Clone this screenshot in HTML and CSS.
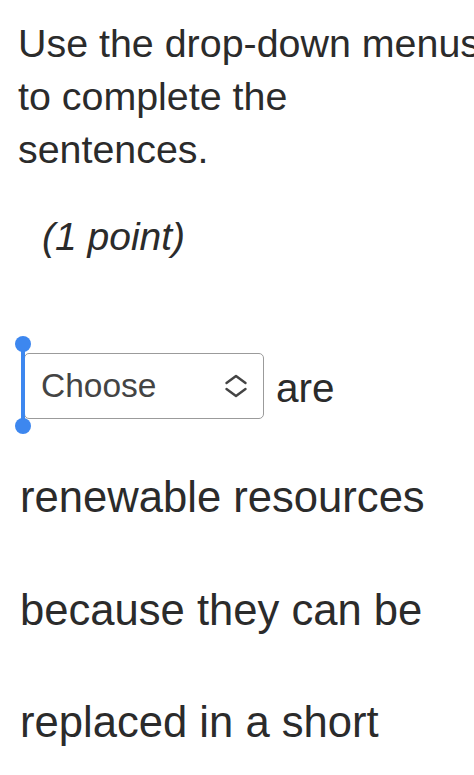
FILE: index.html
```html
<!DOCTYPE html>
<html lang="en">
<head>
<meta charset="utf-8">
<title>Drop-down question</title>
<link rel="stylesheet" href="styles.css">
</head>
<body>
<main class="page">
  <p class="prompt">Use the drop-down menus<br>to complete the<br>sentences.</p>
  <p class="points">(1 point)</p>
  <div class="row">
    <div class="select-wrap">
      <div class="select">
        <span class="select-label">Choose</span>
        <svg class="chevron" width="24" height="24" viewBox="0 0 24 24" aria-hidden="true">
          <polyline points="2.5,9 12,2 21.5,9" fill="none" stroke="#444" stroke-width="2.4" stroke-linecap="round" stroke-linejoin="round"/>
          <polyline points="2.5,15 12,22 21.5,15" fill="none" stroke="#444" stroke-width="2.4" stroke-linecap="round" stroke-linejoin="round"/>
        </svg>
      </div>
      <div class="handle">
        <span class="handle-line"></span>
        <span class="handle-dot handle-top"></span>
        <span class="handle-dot handle-bottom"></span>
      </div>
    </div>
    <span class="after">are</span>
  </div>
  <p class="sentence">renewable resources because they can be replaced in a short</p>
</main>
</body>
</html>
```
FILE: styles.css
```css
html, body {
  margin: 0;
  padding: 0;
  background: #ffffff;
  overflow-x: hidden;
}

.page {
  font-family: "Liberation Sans", Arial, Helvetica, sans-serif;
  color: #2b2b2b;
  padding: 17px 0 0 18px;
}

.prompt {
  margin: 0;
  font-size: 39.4px;
  line-height: 53px;
  white-space: nowrap;
}

.points {
  margin: 34px 0 0 24px;
  font-size: 39px;
  line-height: 53px;
  font-style: italic;
}

.row {
  display: flex;
  align-items: center;
  margin-top: 90px;
  padding-left: 6px;
}

.select-wrap {
  position: relative;
  width: 240px;
  height: 66px;
}

.select {
  box-sizing: border-box;
  width: 240px;
  height: 66px;
  border: 1.5px solid #9b9b9b;
  border-radius: 5px;
  display: flex;
  align-items: center;
  justify-content: space-between;
  padding: 0 15px 0 16px;
}

.select-label {
  font-size: 33.5px;
  color: #444444;
}

.chevron {
  display: block;
}

.handle {
  position: absolute;
  left: -9px;
  top: -17px;
  width: 16px;
  height: 98px;
}

.handle-line {
  position: absolute;
  left: 6px;
  top: 8px;
  width: 4px;
  height: 82px;
  background: #3d87ef;
}

.handle-dot {
  position: absolute;
  left: 0;
  width: 16px;
  height: 16px;
  border-radius: 50%;
  background: #3d87ef;
}

.handle-top {
  top: 0;
}

.handle-bottom {
  top: 82px;
}

.after {
  margin-left: 12px;
  font-size: 40.5px;
  margin-top: 4px;
}

.sentence {
  margin: 22px 0 0 2px;
  width: 452px;
  font-size: 43.6px;
  line-height: 112.5px;
}
```
